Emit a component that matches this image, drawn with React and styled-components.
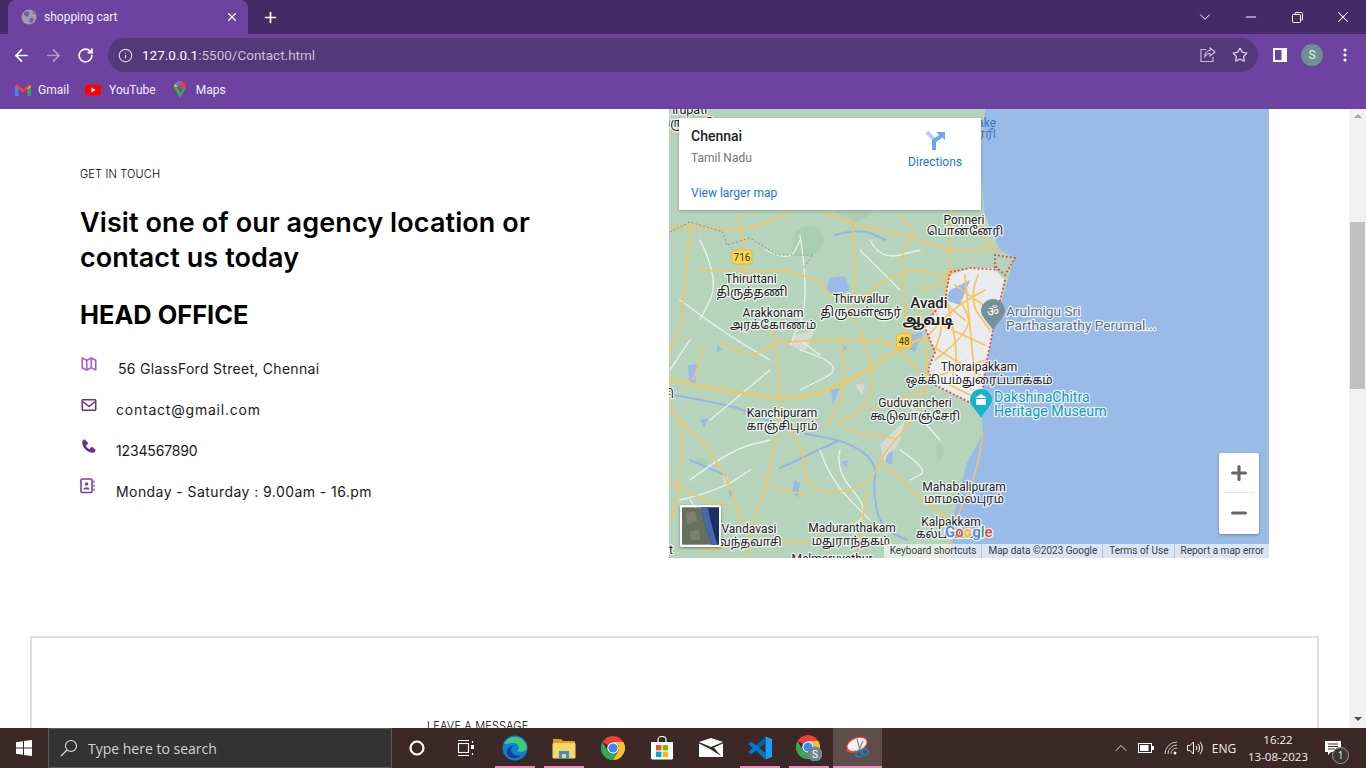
import React from 'react';
import styled, { createGlobalStyle } from 'styled-components';
import { ArrowLeft, ArrowRight, RotateCw, Info, Star, X, Plus, Minus, ChevronDown, ChevronUp } from 'lucide-react';
import { BiMapAlt, BiEnvelope, BiSolidPhone } from 'react-icons/bi';

const GlobalStyle = createGlobalStyle`
  html, body {
    margin: 0;
    height: 100%;
    overflow: hidden;
    background: #fff;
  }
  #root { height: 100%; }
  * { box-sizing: border-box; }
`;

const Shell = styled.div`
  height: 768px;
  display: flex;
  flex-direction: column;
  font-family: Roboto, 'Noto Sans', sans-serif;
`;

/* browser chrome */
const TabStrip = styled.div`
  height: 34px;
  background: #442b67;
  display: flex;
  align-items: flex-end;
  padding-left: 8px;
  color: #fff;
`;

const Tab = styled.div`
  width: 240px;
  height: 34px;
  background: #6d42a0;
  border-radius: 8px 8px 0 0;
  display: flex;
  align-items: center;
  padding: 0 9px 0 13px;
  font-size: 12px;
`;

const TabTitle = styled.span`
  flex: 1;
  margin-left: 7px;
  color: #f4eefb;
`;

const NewTab = styled.div`
  width: 44px;
  height: 34px;
  display: flex;
  align-items: center;
  justify-content: center;
`;

const WindowButtons = styled.div`
  margin-left: auto;
  height: 34px;
  display: flex;
  align-items: center;
`;

const WindowButton = styled.div`
  width: 46px;
  display: flex;
  justify-content: center;
  align-items: center;
`;

const Toolbar = styled.div`
  height: 38px;
  background: #6d42a0;
  display: flex;
  align-items: center;
  padding: 4px 0 0 5px;
  color: #fff;
`;

const NavButton = styled.div`
  width: 32px;
  display: flex;
  justify-content: center;
  opacity: ${(p) => (p.$dim ? 0.45 : 1)};
`;

const AddressBar = styled.div`
  width: 1150px;
  height: 34px;
  margin-left: 7px;
  border-radius: 17px;
  background: #55387a;
  display: flex;
  align-items: center;
  padding: 0 2px 0 10px;
  font-size: 13.5px;
`;

const Url = styled.div`
  flex: 1;
  margin-left: 9px;
  color: #cbbfdb;
  b { font-weight: 400; color: #fff; }
`;

const BarIcon = styled.div`
  width: 32px;
  display: flex;
  justify-content: center;
  color: #d5cce1;
`;

const ToolbarEnd = styled.div`
  flex: 1;
  display: flex;
  align-items: center;
  padding-left: 15px;
  gap: 14px;
`;

const Avatar = styled.div`
  width: 22px;
  height: 22px;
  margin-right: 6px;
  border-radius: 50%;
  background: #6f8f93;
  color: #e9f0f0;
  font-size: 12px;
  display: flex;
  align-items: center;
  justify-content: center;
`;

const Bookmarks = styled.div`
  height: 37px;
  background: #6d42a0;
  display: flex;
  align-items: center;
  padding: 0 0 2px 15px;
  color: #f4eefb;
  font-size: 12px;
`;

const Bookmark = styled.div`
  display: flex;
  align-items: center;
  gap: ${(p) => p.$inner}px;
  margin-right: ${(p) => p.$gap}px;
`;

/* page */
const Viewport = styled.div`
  flex: 1;
  min-height: 0;
  display: flex;
  background: #fff;
`;

const Page = styled.div`
  flex: 1;
  overflow: hidden;
  font-family: Inter, 'Open Sans', sans-serif;
  color: #000;
`;

const ContactRow = styled.section`
  display: flex;
`;

const Details = styled.div`
  width: 669px;
  padding: 58px 0 0 80px;
`;

const Eyebrow = styled.div`
  font-size: 11px;
  line-height: 15px;
  letter-spacing: 0.15px;
  font-weight: 300;
  color: #000;
`;

const Heading = styled.h2`
  margin: 23px 0 0;
  width: 490px;
  font-size: 27px;
  line-height: 35px;
  letter-spacing: 0.1px;
  font-weight: 600;
`;

const Office = styled.h3`
  margin: 22px 0 26px;
  font-size: 25.4px;
  line-height: 35px;
  font-weight: 700;
`;

const InfoList = styled.div`
  display: grid;
  gap: 20px;
`;

const InfoRow = styled.div`
  display: flex;
  align-items: flex-start;
  height: 21px;
  font-size: 14px;
  line-height: 21px;
  letter-spacing: ${(p) => p.$track}px;
  color: #1a1a1a;
`;

const InfoIcon = styled.span`
  width: ${(p) => p.$w || 36}px;
  height: 16px;
  margin-top: -3px;
  color: ${(p) => p.$color};
  display: flex;
  font-size: 18px;
`;

const MapFrame = styled.div`
  position: relative;
  width: 600px;
  height: 449px;
  overflow: hidden;
  background: #b5d4bb;
  font-family: Roboto, sans-serif;
`;

const MapArt = styled.svg`
  display: block;
  width: 600px;
  height: 449px;
`;

const PlaceCard = styled.div`
  position: absolute;
  top: 9px;
  left: 10px;
  width: 302px;
  height: 92px;
  background: #fff;
  box-shadow: 0 1px 3px rgba(0, 0, 0, 0.25);
  padding: 9px 12px;
  display: flex;
  justify-content: space-between;
`;

const PlaceName = styled.div`
  font-size: 14px;
  line-height: 18px;
  font-weight: 500;
  color: #202124;
`;

const PlaceRegion = styled.div`
  font-size: 12px;
  line-height: 16px;
  margin-top: 5px;
  color: #70757a;
`;

const MapLink = styled.div`
  font-size: 12px;
  line-height: 16px;
  color: #1a73e8;
  margin-top: ${(p) => p.$top || 0}px;
`;

const DirectionsBox = styled.div`
  display: flex;
  flex-direction: column;
  align-items: center;
  margin: 3px 7px 0 0;
`;

const ZoomBox = styled.div`
  position: absolute;
  right: 10px;
  top: 344px;
  width: 40px;
  height: 81px;
  background: #fff;
  border-radius: 2px;
  box-shadow: 0 1px 3px rgba(0, 0, 0, 0.3);
  display: flex;
  flex-direction: column;
  align-items: center;
  color: #666;
`;

const ZoomStep = styled.div`
  width: 30px;
  height: 40px;
  display: flex;
  align-items: center;
  justify-content: center;
  border-bottom: ${(p) => (p.$line ? '1px solid #e6e6e6' : 'none')};
`;

const SatThumb = styled.svg`
  position: absolute;
  left: 11px;
  top: 396px;
  width: 41px;
  height: 42px;
  border: 2px solid #fff;
  border-radius: 2px;
  box-shadow: 0 1px 3px rgba(0, 0, 0, 0.4);
`;

const Attribution = styled.div`
  position: absolute;
  right: 0;
  bottom: 0;
  height: 14px;
  display: flex;
  background: rgba(255, 255, 255, 0.62);
  font-size: 10px;
  line-height: 14px;
  color: #3c4043;
`;

const AttrItem = styled.span`
  padding: 0 5px 0 6px;
  border-left: ${(p) => (p.$first ? 'none' : '1px solid #b9c4d6')};
  white-space: nowrap;
`;

const MessageCard = styled.section`
  margin: 78px 0 0 30px;
  width: 1289px;
  height: 400px;
  border: 2px solid #e0e0e0;
  padding: 81px 0 0 395px;
  font-size: 11px;
  line-height: 15px;
  letter-spacing: 0.15px;
  font-weight: 300;
  color: #000;
`;

const ScrollTrack = styled.div`
  width: 17px;
  background: #f1f1f1;
  display: flex;
  flex-direction: column;
  align-items: center;
  justify-content: space-between;
  position: relative;
  padding: 5px 0 7px;
`;

const Thumb = styled.div`
  position: absolute;
  top: 113px;
  left: 1px;
  width: 15px;
  height: 167px;
  background: #c1c1c1;
`;

const Caret = styled.span`
  width: 0;
  height: 0;
  border-left: 4px solid transparent;
  border-right: 4px solid transparent;
  ${(p) => (p.$up ? 'border-bottom: 4px solid #a3a3a3;' : 'border-top: 4px solid #505050;')}
`;

/* taskbar */
const Taskbar = styled.div`
  height: 40px;
  background: #3c2826;
  display: flex;
  color: #fff;
`;

const StartButton = styled.div`
  width: 48px;
  display: flex;
  align-items: center;
  justify-content: center;
`;

const SearchBox = styled.div`
  width: 344px;
  background: #333;
  border: 1px solid #5b5b5b;
  display: flex;
  align-items: center;
  padding-left: 11px;
  gap: 10px;
  font-size: 14px;
  color: #d2d2d2;
  font-family: 'Open Sans', sans-serif;
`;

const AppCell = styled.div`
  position: relative;
  width: 49px;
  display: flex;
  align-items: center;
  justify-content: center;
  background: ${(p) => (p.$active ? '#5f4d4b' : 'transparent')};
  &::after {
    content: '';
    display: ${(p) => (p.$open ? 'block' : 'none')};
    position: absolute;
    bottom: 0;
    left: ${(p) => (p.$active ? 0 : 5)}px;
    right: ${(p) => (p.$active ? 0 : 4)}px;
    height: 2px;
    background: #f08bbb;
  }
`;

const Tray = styled.div`
  margin-left: auto;
  display: flex;
  align-items: center;
  font-family: 'Open Sans', sans-serif;
  font-size: 12px;
  color: #f0f0f0;
`;

const TrayIcon = styled.span`
  width: ${(p) => p.$w}px;
  display: flex;
  justify-content: center;
`;

const Clock = styled.div`
  width: 74px;
  text-align: center;
  line-height: 17px;
  font-size: 11.5px;
`;

const Notify = styled.div`
  position: relative;
  width: 51px;
  height: 40px;
  padding: 12px 0 0 10px;
`;

const NotifyBadge = styled.span`
  position: absolute;
  top: 19px;
  left: 17px;
  width: 17px;
  height: 17px;
  border-radius: 50%;
  background: #3c3634;
  border: 1px solid #9a9a9a;
  font-size: 10px;
  line-height: 15px;
  text-align: center;
`;

/* turns a rough polyline into a bent road */
const smooth = (d) => {
  const n = d.match(/\d+(\.\d+)?/g).map(Number);
  const pts = [];
  for (let i = 0; i < n.length; i += 2) pts.push([n[i], n[i + 1]]);
  let out = `M${pts[0][0]} ${pts[0][1]}`;
  for (let i = 1; i < pts.length - 1; i += 1) {
    const mx = (pts[i][0] + pts[i + 1][0]) / 2;
    const my = (pts[i][1] + pts[i + 1][1]) / 2;
    out += ` Q${pts[i][0]} ${pts[i][1]} ${mx} ${my}`;
  }
  const last = pts[pts.length - 1];
  return `${out} L${last[0]} ${last[1]}`;
};

/* map data, in page coordinates */
const orange = [
  'M669 228 L690 225 L743 232 L787 213',
  'M690 225 L687 272 L680 332 L669 352',
  'M737 212 L743 232 L743 272 L750 282 L745 300',
  'M700 270 L750 272 L787 270 L823 282 L827 295 L860 302 L900 268 L947 275',
  'M823 212 L853 225 L910 235 L950 252 L993 248',
  'M853 225 L855 290 L853 325',
  'M910 235 L900 255 L905 295 L905 332',
  'M950 212 L950 272',
  'M773 330 L783 400 L775 437 L767 487 L753 520 L747 557',
  'M777 343 L840 338 L893 343',
  'M840 338 L850 380 L827 427',
  'M860 330 L873 367 L870 407 L827 427 L893 438',
  'M867 410 L927 390',
  'M790 430 L803 447 L807 493 L867 490 L887 447 L913 423 L927 390 L927 347',
  'M767 487 L807 495',
  'M867 490 L857 557',
  'M883 465 L923 500 L947 517 L953 533',
  'M983 433 L978 470 L960 510 L953 530 L948 558',
  'M669 403 L680 423 L703 443 L723 470 L740 513 L740 530',
  'M680 423 L683 463 L673 517',
  'M705 347 L693 380',
  'M777 540 L803 543 L857 540',
  'M905 335 L927 300',
  'M720 340 L745 360 L773 345',
  'M700 550 L745 545',
  'M669 480 L700 500 L730 505',
  'M975 215 L985 245 L1000 250',
  'M900 215 L915 235',
];

const highways = ['M669 380 L710 388 L777 398 L810 397 L850 380 L873 367 L900 347 L927 337'];

const urbanRoads = [
  'M927 337 L950 310 L985 290',
  'M935 360 L975 330 L960 300',
  'M945 295 L960 350 L950 385',
  'M930 320 L985 345',
  'M965 275 L975 380',
  'M940 375 L985 360',
  'M955 285 L990 310',
  'M925 300 L945 320 L935 350',
  'M950 268 L940 300 L965 320',
  'M978 275 L968 300 L990 330',
  'M930 345 L955 360 L980 375',
  'M927 380 L900 350 L880 340',
  'M950 385 L970 395',
  'M920 290 L940 285 L955 270',
];

const white = [
  'M700 240 L720 280 L700 320',
  'M800 235 L810 300 L790 345',
  'M870 240 L880 260 L920 250',
  'M680 300 L720 330 L770 360',
  'M800 350 L850 365 L800 390',
  'M690 480 L730 450 L770 440',
  'M820 450 L830 480 L870 520',
  'M710 420 L770 370',
  'M900 450 L930 470 L910 480',
  'M680 500 L720 490 L750 470',
  'M720 540 L690 500',
  'M860 250 L900 290',
  'M905 400 L940 440',
  'M840 450 L835 470 L870 510 L850 530',
  'M765 250 L790 262 L800 240',
  'M690 340 L670 370',
  'M820 355 L800 340',
  'M950 345 L975 320',
  'M960 360 L980 335',
  'M945 345 L965 375',
  'M965 300 L990 290',
  'M940 320 L960 330',
];

const rivers = [
  'M673 395 L703 400 L747 410 L790 432 L845 440 L877 462 L873 490 L880 527 L907 540',
  'M780 468 L840 440',
  'M725 475 L690 460',
  'M835 235 L860 228 L885 240',
];

const lakes = [
  'M829 278 L845 276 L850 290 L835 296 L827 290 Z',
  'M688 365 L697 364 L695 385 L689 380 Z',
  'M795 480 L800 483 L798 498 L792 492 Z',
  'M887 455 L893 450 L892 465 L885 462 Z',
  'M910 335 L923 332 L915 352 L908 348 Z',
  'M831 390 L840 388 L833 405 Z',
  'M700 420 L708 418 L704 428 Z',
  'M950 290 L970 280 L960 305 L945 300 Z',
  'M718 345 L722 350 L716 352 Z',
  'M843 345 L848 348 L842 352 Z',
  'M728 490 L734 492 L730 498 Z',
  'M842 462 L848 460 L846 468 Z',
  'M820 545 L826 547 L822 552 Z',
];

const greys = [
  'M795 335 L815 330 L805 352 L790 345 Z',
  'M880 445 L905 420 L900 440 L885 465 Z',
  'M855 385 L865 383 L862 395 Z',
  'M722 470 L728 478 L724 486 Z',
];

const labels = [
  ['Thiruttani', 751, 283], ['திருத்தணி', 752, 296, 12.5],
  ['Arakkonam', 773, 317], ['அரக்கோணம்', 773, 329],
  ['Thiruvallur', 861, 303], ['திருவள்ளூர்', 861, 316, 12.5],
  ['Avadi', 929, 308, 15, 500], ['ஆவடி', 928, 325, 15, 700],
  ['Ponneri', 964, 224], ['பொன்னேரி', 965, 235],
  ['Thoraipakkam', 979, 371], ['ஒக்கியம்துரைப்பாக்கம்', 979, 384],
  ['Kanchipuram', 782, 417], ['காஞ்சிபுரம்', 782, 430],
  ['Guduvancheri', 915, 407], ['கூடுவாஞ்சேரி', 915, 420],
  ['Mahabalipuram', 964, 491], ['மாமல்லபுரம்', 964, 503],
  ['Kalpakkam', 951, 526], ['கல்பாக்கம்', 950, 538],
  ['Maduranthakam', 852, 532], ['மதுராந்தகம்', 851, 545],
  ['Vandavasi', 749, 533], ['வந்தவாசி', 750, 546],
  ['Melmaruvathur', 832, 563],
  ['Tirupati', 686, 114, 12.5], ['திருப்பதி', 686, 127],
  ['Chetpet', 652, 554],
  ['காஞ்சி', 652, 398],
];

const poiGrey = [['Arulmigu Sri', 1006, 316], ['Parthasarathy Perumal...', 1006, 330]];
const poiTeal = [['DakshinaChitra', 994, 402], ['Heritage Museum', 994, 416]];

const haloText = {
  paintOrder: 'stroke',
  stroke: 'rgba(255,255,255,.8)',
  strokeWidth: 2.5,
  strokeLinejoin: 'round',
};

const Shield = ({ x, y, w, text }) => (
  <g>
    <rect x={x - w / 2} y={y - 7} width={w} height={14} rx={3} fill="#fbd64e" stroke="#e8b93a" />
    <text x={x} y={y + 3.5} fontSize="10" textAnchor="middle" fill="#333">{text}</text>
  </g>
);

const strokes = (list, stroke, width) =>
  list.map((d) => (
    <path key={d} d={smooth(d)} fill="none" stroke={stroke} strokeWidth={width} strokeLinejoin="round" strokeLinecap="round" />
  ));

const MapDrawing = () => (
  <MapArt viewBox="669 109 600 449" fontFamily="Roboto, 'Noto Sans Tamil', sans-serif">
    <rect x="669" y="109" width="600" height="449" fill="#b5d4bb" />
    <path d="M795 232 C805 222 822 225 825 240 C822 255 800 262 792 250 Z M835 212 L858 222 L875 212 Z M695 460 C705 455 712 462 705 470 Z M935 445 C945 440 948 455 938 462 Z" fill="#a9ceb1" />
    <path d="M985 109 L1269 109 L1269 558 L948 558 L953 517 L967 463 L983 433 L981 405 L985 363 L993 330 L1008 280 L1014 258 L1000 250 L985 215 L980 160 Z" fill="#9abbe8" />
    <path d="M950 275 L970 268 L993 268 L1005 280 L993 330 L985 370 L981 408 L955 395 L935 385 L928 370 L935 352 L924 325 L945 300 Z" fill="#e9ebef" />
    {greys.map((d) => <path key={d} d={d} fill="#d5dcd4" />)}
    {lakes.map((d) => <path key={d} d={d} fill="#9abbe8" />)}
    {strokes(rivers, '#94b6e4', 2)}
    {strokes(white, '#eaf3eb', 1.3)}
    {strokes(orange, '#f3c463', 1.6)}
    {strokes(highways, '#f3c463', 2.6)}
    {strokes(urbanRoads, '#f5c55f', 1.7)}
    <path d="M950 272 L970 268 L1000 270 M995 268 L995 255 L1015 258 L1005 275 L995 266 M1005 280 L993 330 L985 370 L981 408 L955 395 L935 385 L928 370 L935 352 L924 325 L945 300 L950 272" fill="none" stroke="#ea4335" strokeWidth="1.8" strokeDasharray="1.8 2.2" />
    <path d="M670 232 L690 222 L723 232 L727 245 L750 238 L777 255 L813 255 L803 268 M980 140 L972 205" fill="none" stroke="#8d9a92" strokeWidth="1" strokeDasharray="2 2" />
    <Shield x={742} y={257} w={20} text="716" />
    <Shield x={904} y={341} w={15} text="48" />
    {labels.map(([text, x, y, size = 12, weight = 400]) => (
      <text key={text} x={x} y={y} fontSize={size} fontWeight={weight} textAnchor="middle" fill="#222" style={haloText}>{text}</text>
    ))}
    <text x="996" y="127" fontSize="12" textAnchor="end" fill="#3a78c2">Lake</text>
    <text x="996" y="138" fontSize="12" textAnchor="end" fill="#3a78c2">ஏரி</text>
    <path d="M993 330 C986 320 981 316 981 311 A12 12 0 0 1 1005 311 C1005 316 1000 320 993 330 Z" fill="#78909c" />
    <text x="993" y="316" fontSize="13" textAnchor="middle" fill="#fff">ॐ</text>
    {poiGrey.map(([text, x, y]) => (
      <text key={text} x={x} y={y} fontSize="13.7" fill="#607282" style={haloText}>{text}</text>
    ))}
    <path d="M981 418 C975 408 970 405 970 400 A11 11 0 0 1 992 400 C992 405 987 408 981 418 Z" fill="#12b5cb" />
    <path d="M975 398 L981 394 L987 398 Z M976 399 H986 V405 H976 Z" fill="#fff" />
    {poiTeal.map(([text, x, y]) => (
      <text key={text} x={x} y={y} fontSize="14.2" fill="#129eaf" style={haloText}>{text}</text>
    ))}
    <text x="945" y="537" fontSize="15" fontWeight="500" style={haloText}>
      <tspan fill="#4285f4">G</tspan><tspan fill="#ea4335">o</tspan><tspan fill="#fbbc05">o</tspan><tspan fill="#4285f4">g</tspan><tspan fill="#34a853">l</tspan><tspan fill="#ea4335">e</tspan>
    </text>
  </MapArt>
);

const GlobeIcon = () => (
  <svg width="16" height="16" viewBox="0 0 16 16">
    <circle cx="8" cy="8" r="7.5" fill="#a59bb3" />
    <path d="M3 3 L7 2 L9 5 L6 8 L3 6 Z M9 9 L13 9 L11 14 L8 13 Z M11 2 L14 5 L12 5 Z" fill="#6d42a0" opacity=".7" />
  </svg>
);

const GmailIcon = () => (
  <svg width="16" height="12" viewBox="0 0 16 12">
    <path d="M0 2 L0 12 L3.5 12 L3.5 4 Z" fill="#4285f4" />
    <path d="M16 2 L16 12 L12.5 12 L12.5 4 Z" fill="#34a853" />
    <path d="M0 2 L2 0.5 L8 5 L14 0.5 L16 2 L12.5 5 L8 8.5 L3.5 5 Z" fill="#ea4335" />
    <path d="M12.5 4 L16 1.6 L16 3 L12.5 5.5 Z" fill="#fbbc05" />
  </svg>
);

const YoutubeIcon = () => (
  <svg width="16" height="12" viewBox="0 0 16 12">
    <rect width="16" height="11" y="0.5" rx="3" fill="#f00" />
    <path d="M6.5 3.5 L10.5 6 L6.5 8.5 Z" fill="#fff" />
  </svg>
);

const MapsIcon = () => (
  <svg width="12" height="17" viewBox="0 0 12 17">
    <path d="M6 17 C4 12 0 9.5 0 6 L3 6 L6 10 L8 13 Z" fill="#34a853" />
    <path d="M6 17 C8 12 12 9.5 12 6 L8 8 Z" fill="#34a853" />
    <path d="M1 2.4 A6 6 0 0 0 0 6 L4 6 Z" fill="#fbbc05" />
    <path d="M1 2.4 L4 6 L8 2 L6 0 A6 6 0 0 0 1 2.4 Z" fill="#4285f4" />
    <path d="M6 0 A6 6 0 0 1 12 6 L8 8 L4 6 Z" fill="#ea4335" />
    <circle cx="6" cy="6" r="2" fill="#7e57a8" />
  </svg>
);

const ContactIcon = () => (
  <svg width="15" height="16" viewBox="0 0 15 16" fill="none">
    <rect x="1" y="1" width="11" height="13.5" rx="1" stroke="#7b3fa8" strokeWidth="1.6" />
    <circle cx="6.5" cy="6" r="1.8" fill="#7b3fa8" />
    <path d="M3.5 11.5 C3.5 8.5 9.5 8.5 9.5 11.5 Z" fill="#7b3fa8" />
    <path d="M14 2.5 V5 M14 6.5 V9 M14 10.5 V13" stroke="#9a6cc0" strokeWidth="1.4" />
  </svg>
);

const ShareIcon = () => (
  <svg width="16" height="16" viewBox="0 0 16 16" fill="none" stroke="#c9bfd6" strokeWidth="1.1">
    <path d="M6 2.5 H1 V14.5 H13 V10" />
    <path d="M10 1 L15 5 L10 9 V6.5 C7 6.5 5.5 8 4.5 10.5 C4.5 6.5 6.5 3.8 10 3.5 Z" />
  </svg>
);

const SidePanelIcon = () => (
  <svg width="14" height="14" viewBox="0 0 14 14">
    <rect width="14" height="14" fill="#fff" />
    <rect x="2" y="2" width="6.5" height="10" fill="#6d42a0" />
  </svg>
);

const DotsIcon = () => (
  <svg width="4" height="14" viewBox="0 0 4 14" fill="#fff">
    <circle cx="2" cy="2" r="1.6" /><circle cx="2" cy="7" r="1.6" /><circle cx="2" cy="12" r="1.6" />
  </svg>
);

const RestoreIcon = () => (
  <svg width="11" height="11" viewBox="0 0 11 11" fill="none" stroke="#fff">
    <rect x="0.5" y="2.5" width="8" height="8" rx="1" />
    <path d="M3 2.5 V1.5 A1 1 0 0 1 4 0.5 H9.5 A1 1 0 0 1 10.5 1.5 V7 A1 1 0 0 1 9.5 8 H8.5" />
  </svg>
);

const DirectionsIcon = () => (
  <svg width="22" height="20" viewBox="0 0 22 20">
    <path d="M1 3 L5 1 L12 9 L9 11 Z" fill="#b5cff5" />
    <path d="M8 20 V10 L15 5 L12.5 2 H21 V10 L18.5 7.5 L12 12 V20 Z" fill="#6ea6ee" />
  </svg>
);

const WindowsLogo = () => (
  <svg width="16" height="16" viewBox="0 0 16 16" fill="#fff">
    <path d="M0 2.2 L7 1.2 V7.5 H0 Z M8 1 L16 0 V7.5 H8 Z M0 8.5 H7 V14.8 L0 13.8 Z M8 8.5 H16 V16 L8 15 Z" />
  </svg>
);

const SearchGlass = () => (
  <svg width="18" height="18" viewBox="0 0 18 18" fill="none" stroke="#e2e2e2" strokeWidth="1.1">
    <circle cx="11" cy="7" r="5.5" />
    <path d="M7 11 L1 17" />
  </svg>
);

const CortanaIcon = () => (
  <svg width="16" height="16" viewBox="0 0 16 16" fill="none">
    <circle cx="8" cy="8" r="6.5" stroke="#fff" strokeWidth="2.2" />
  </svg>
);

const TaskViewIcon = () => (
  <svg width="18" height="16" viewBox="0 0 18 16" fill="none" stroke="#fff" strokeWidth="1.1">
    <path d="M1 0.5 H12 M1 15.5 H12" />
    <rect x="1.5" y="3.5" width="10" height="9" />
    <path d="M15.5 1 V3 M15.5 13 V15" />
    <rect x="14" y="5" width="3" height="4" fill="#fff" stroke="none" />
  </svg>
);

const EdgeIcon = () => (
  <svg width="26" height="26" viewBox="0 0 26 26">
    <circle cx="13" cy="13" r="12.5" fill="#0c7fd0" />
    <path d="M2 8 C6 0 22 -1 25 12 C25 17 18 18 15 16 C19 13 16 8 11 8 C7 8 4 10 2 8 Z" fill="#3ec77e" />
    <path d="M9 15 C9 19 14 22 19 20 C15 25 7 24 5 18 C4 13 9 10 13 11 C10 11 9 13 9 15 Z" fill="#143e8f" />
  </svg>
);

const ExplorerIcon = () => (
  <svg width="24" height="21" viewBox="0 0 24 21">
    <path d="M1 1 H9 L11 3 H23 V8 H1 Z" fill="#d9a21b" />
    <rect x="0.5" y="5" width="23" height="15.5" rx="1" fill="#f8d469" />
    <path d="M7 20.5 V13 H17 V20.5 H14 V16 H10 V20.5 Z" fill="#3a8fd6" />
  </svg>
);

const ChromeIcon = () => (
  <svg width="24" height="24" viewBox="0 0 24 24">
    <path d="M12 0 A12 12 0 0 1 22.4 6 H12 A6 6 0 0 0 6.8 9 L1.6 6 A12 12 0 0 1 12 0 Z" fill="#ea4335" />
    <path d="M22.4 6 A12 12 0 0 1 12 24 L17.2 15 A6 6 0 0 0 17.2 9 L12 6 Z" fill="#fbc02d" />
    <path d="M1.6 6 L6.8 15 A6 6 0 0 0 17.2 15 L12 24 A12 12 0 0 1 1.6 6 Z" fill="#34a853" />
    <circle cx="12" cy="12" r="5.8" fill="#fff" />
    <circle cx="12" cy="12" r="4.6" fill="#4285f4" />
  </svg>
);

const StoreIcon = () => (
  <svg width="24" height="24" viewBox="0 0 24 24">
    <path d="M1 6 H23 V22 A1.5 1.5 0 0 1 21.5 23.5 H2.5 A1.5 1.5 0 0 1 1 22 Z" fill="#fff" />
    <path d="M8 8 V3.5 A4 3 0 0 1 16 3.5 V8" fill="none" stroke="#fff" strokeWidth="1.2" />
    <rect x="6" y="9" width="5.4" height="5.4" fill="#f25022" />
    <rect x="12.6" y="9" width="5.4" height="5.4" fill="#7fba00" />
    <rect x="6" y="15.6" width="5.4" height="5.4" fill="#00a4ef" />
    <rect x="12.6" y="15.6" width="5.4" height="5.4" fill="#ffb900" />
  </svg>
);

const MailIcon = () => (
  <svg width="24" height="20" viewBox="0 0 24 20" fill="#fff">
    <path d="M0 4 L12 0 L24 4 L12 9 Z" />
    <path d="M0 5.5 V19 H24 V5.5 L15 9.5 L22 18 L11 11 Z" />
  </svg>
);

const VsCodeIcon = () => (
  <svg width="24" height="24" viewBox="0 0 24 24">
    <path d="M17.5 0.5 L24 3 V21 L17.5 23.5 Z" fill="#1f9cf0" />
    <path d="M17.5 0.5 V7 L8 14.5 L3.5 18 L0.5 16 L5 12 L0.5 8 L3.5 6 L8 9.5 Z" fill="#0065a9" />
    <path d="M17.5 23.5 V17 L8 9.5 L3.5 6 L0.5 8 L5 12 L0.5 16 L3.5 18 L8 14.5 Z" fill="#007acc" />
  </svg>
);

const ProfileChrome = () => (
  <svg width="26" height="26" viewBox="0 0 26 26">
    <path d="M12 0 A12 12 0 0 1 22.4 6 H12 A6 6 0 0 0 6.8 9 L1.6 6 A12 12 0 0 1 12 0 Z" fill="#ea4335" />
    <path d="M22.4 6 A12 12 0 0 1 12 24 L17.2 15 A6 6 0 0 0 17.2 9 L12 6 Z" fill="#fbc02d" />
    <path d="M1.6 6 L6.8 15 A6 6 0 0 0 17.2 15 L12 24 A12 12 0 0 1 1.6 6 Z" fill="#34a853" />
    <circle cx="12" cy="12" r="5.8" fill="#fff" />
    <circle cx="12" cy="12" r="4.6" fill="#4285f4" />
    <circle cx="19" cy="19" r="7.5" fill="#6f8791" />
    <text x="19" y="22.5" fontSize="10" textAnchor="middle" fill="#fff" fontFamily="Roboto, sans-serif">S</text>
  </svg>
);

const SnipIcon = () => (
  <svg width="24" height="24" viewBox="0 0 24 24" fill="none">
    <ellipse cx="11" cy="8.5" rx="10.5" ry="6.5" transform="rotate(-22 11 8.5)" fill="#f4eeee" stroke="#e44d45" strokeWidth="1.2" />
    <path d="M1 13 C2 17 7 16 10 15" stroke="#e44d45" strokeWidth="1.6" />
    <path d="M11 3 L14 14 M17 5 L13 14" stroke="#8d8d8d" strokeWidth="1.3" />
    <circle cx="13" cy="18" r="3" stroke="#1f7fc4" strokeWidth="1.6" />
    <circle cx="19" cy="16" r="3" stroke="#1f7fc4" strokeWidth="1.6" />
  </svg>
);

const BatteryIcon = () => (
  <svg width="16" height="10" viewBox="0 0 16 10" fill="none">
    <rect x="0.5" y="0.5" width="13" height="9" stroke="#fff" />
    <rect x="2" y="2" width="8.5" height="6" fill="#fff" />
    <rect x="14" y="3" width="2" height="4" fill="#fff" />
  </svg>
);

const WifiIcon = () => (
  <svg width="14" height="14" viewBox="0 0 14 14" fill="none" stroke="#c9c4c3" strokeWidth="1">
    <path d="M1 13 A12 12 0 0 1 13 1 M4 13 A9 9 0 0 1 13 4 M7 13 A6 6 0 0 1 13 7" />
    <circle cx="11" cy="12" r="1.5" fill="#fff" stroke="none" />
  </svg>
);

const VolumeIcon = () => (
  <svg width="17" height="14" viewBox="0 0 17 14" fill="none" stroke="#fff" strokeWidth="1">
    <path d="M0.5 4.5 H3 L6.5 1 V13 L3 9.5 H0.5 Z" />
    <path d="M9 5 A3 3 0 0 1 9 9 M11 3 A6 6 0 0 1 11 11 M13 1 A9 9 0 0 1 13 13" />
  </svg>
);

const NotifyIcon = () => (
  <svg width="16" height="16" viewBox="0 0 16 16">
    <path d="M0 1 H16 V12 H6 L3 15 V12 H0 Z" fill="#fff" />
    <path d="M3 4 H13 M3 6.5 H13 M3 9 H10" stroke="#3c2826" />
  </svg>
);

const apps = [
  { icon: <CortanaIcon /> },
  { icon: <TaskViewIcon /> },
  { icon: <EdgeIcon />, open: true },
  { icon: <ExplorerIcon />, open: true },
  { icon: <ChromeIcon /> },
  { icon: <StoreIcon /> },
  { icon: <MailIcon /> },
  { icon: <VsCodeIcon />, open: true },
  { icon: <ProfileChrome />, open: true },
  { icon: <SnipIcon />, open: true, active: true },
];

const infoRows = [
  { text: '56 GlassFord Street, Chennai', icon: <BiMapAlt />, color: '#b44fe0', w: 38, track: 0.29 },
  { text: 'contact@gmail.com', icon: <BiEnvelope />, color: '#6d2f8f', track: 0.78 },
  { text: '1234567890', icon: <BiSolidPhone />, color: '#6b2d90', track: -0.15 },
  { text: 'Monday - Saturday : 9.00am - 16.pm', icon: <ContactIcon />, color: '#7b3fa8', track: 0.43 },
];

const App = () => (
  <Shell>
    <GlobalStyle />
    <TabStrip>
      <Tab>
        <GlobeIcon />
        <TabTitle>shopping cart</TabTitle>
        <X size={14} />
      </Tab>
      <NewTab><Plus size={17} strokeWidth={2.4} /></NewTab>
      <WindowButtons>
        <WindowButton><ChevronDown size={18} strokeWidth={1.3} /></WindowButton>
        <WindowButton><Minus size={16} strokeWidth={1.6} /></WindowButton>
        <WindowButton><RestoreIcon /></WindowButton>
        <WindowButton><X size={18} strokeWidth={1.4} /></WindowButton>
      </WindowButtons>
    </TabStrip>
    <Toolbar>
      <NavButton><ArrowLeft size={19} strokeWidth={2.2} /></NavButton>
      <NavButton $dim><ArrowRight size={19} strokeWidth={2.2} /></NavButton>
      <NavButton><RotateCw size={17} strokeWidth={2.4} /></NavButton>
      <AddressBar>
        <Info size={15} color="#d5cce1" />
        <Url><b>127.0.0.1</b>:5500/Contact.html</Url>
        <BarIcon><ShareIcon /></BarIcon>
        <BarIcon><Star size={16} /></BarIcon>
      </AddressBar>
      <ToolbarEnd>
        <SidePanelIcon />
        <Avatar>S</Avatar>
        <DotsIcon />
      </ToolbarEnd>
    </Toolbar>
    <Bookmarks>
      <Bookmark $inner={7} $gap={16}><GmailIcon />Gmail</Bookmark>
      <Bookmark $inner={8} $gap={18}><YoutubeIcon />YouTube</Bookmark>
      <Bookmark $inner={10} $gap={0}><MapsIcon />Maps</Bookmark>
    </Bookmarks>
    <Viewport>
      <Page>
        <ContactRow>
          <Details>
            <Eyebrow>GET IN TOUCH</Eyebrow>
            <Heading>Visit one of our agency location or contact us today</Heading>
            <Office>HEAD OFFICE</Office>
            <InfoList>
              {infoRows.map((row) => (
                <InfoRow key={row.text} $track={row.track}>
                  <InfoIcon $color={row.color} $w={row.w}>{row.icon}</InfoIcon>
                  {row.text}
                </InfoRow>
              ))}
            </InfoList>
          </Details>
          <MapFrame>
            <MapDrawing />
            <PlaceCard>
              <div>
                <PlaceName>Chennai</PlaceName>
                <PlaceRegion>Tamil Nadu</PlaceRegion>
                <MapLink $top={19}>View larger map</MapLink>
              </div>
              <DirectionsBox>
                <DirectionsIcon />
                <MapLink $top={4}>Directions</MapLink>
              </DirectionsBox>
            </PlaceCard>
            <SatThumb viewBox="0 0 40 40">
              <rect width="40" height="40" fill="#66705f" />
              <path d="M4 6 L14 4 L16 14 L6 18 Z M8 26 L18 24 L20 34 L10 36 Z" fill="#7b8270" />
              <path d="M21 0 H40 V40 H32 C28 28 22 14 21 0 Z" fill="#1c2f66" />
              <path d="M21 0 C22 14 28 28 32 40 H38 C34 26 30 12 28 0 Z" fill="#4a68a8" />
            </SatThumb>
            <ZoomBox>
              <ZoomStep $line><Plus size={22} strokeWidth={3.4} /></ZoomStep>
              <ZoomStep><Minus size={22} strokeWidth={3.4} /></ZoomStep>
            </ZoomBox>
            <Attribution>
              <AttrItem $first>Keyboard shortcuts</AttrItem>
              <AttrItem>Map data ©2023 Google</AttrItem>
              <AttrItem>Terms of Use</AttrItem>
              <AttrItem>Report a map error</AttrItem>
            </Attribution>
          </MapFrame>
        </ContactRow>
        <MessageCard>LEAVE A MESSAGE</MessageCard>
      </Page>
      <ScrollTrack>
        <Caret $up />
        <Thumb />
        <Caret />
      </ScrollTrack>
    </Viewport>
    <Taskbar>
      <StartButton><WindowsLogo /></StartButton>
      <SearchBox><SearchGlass />Type here to search</SearchBox>
      {apps.map((app, i) => (
        <AppCell key={i} $open={app.open} $active={app.active}>{app.icon}</AppCell>
      ))}
      <Tray>
        <TrayIcon $w={24}><ChevronUp size={20} strokeWidth={1.1} /></TrayIcon>
        <TrayIcon $w={26}><BatteryIcon /></TrayIcon>
        <TrayIcon $w={24}><WifiIcon /></TrayIcon>
        <TrayIcon $w={24}><VolumeIcon /></TrayIcon>
        <TrayIcon $w={34}>ENG</TrayIcon>
        <Clock>16:22<br />13-08-2023</Clock>
        <Notify>
          <NotifyIcon />
          <NotifyBadge>1</NotifyBadge>
        </Notify>
      </Tray>
    </Taskbar>
  </Shell>
);

export default App;
